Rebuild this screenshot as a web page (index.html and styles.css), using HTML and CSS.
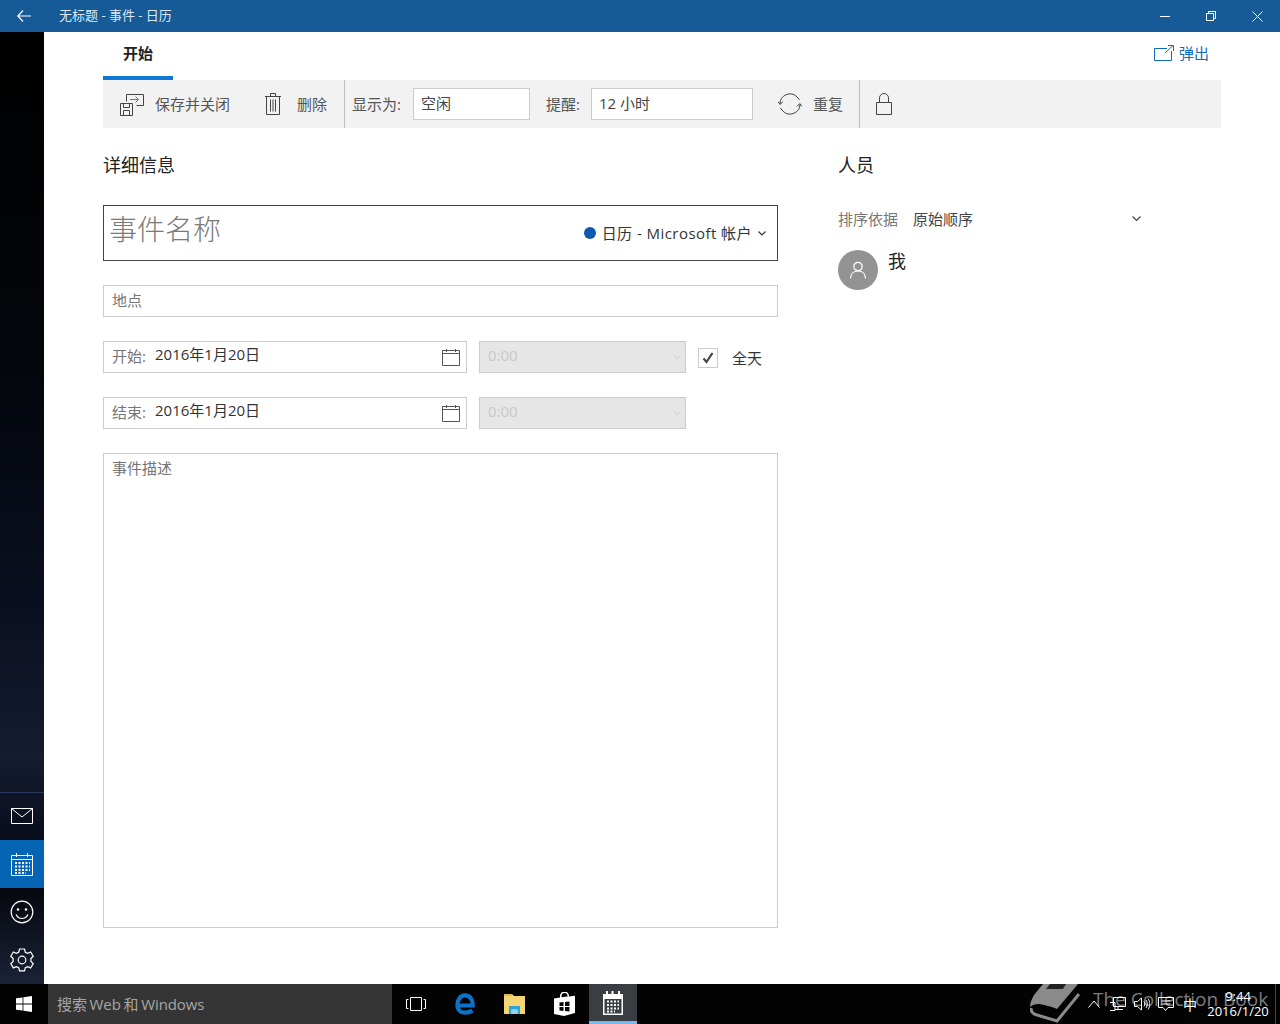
FILE: index.html
```html
<!DOCTYPE html>
<html lang="zh-CN">
<head>
  <meta charset="UTF-8">
  <title>无标题 - 事件 - 日历</title>
  <link rel="stylesheet" href="styles.css">
</head>
<body>
  <div class="titleBar">
    <svg class="backIcon" width="14" height="12" viewBox="0 0 14 12"><path d="M6 .5 .8 6 6 11.500M1 6h13" fill="none" stroke="#fff" stroke-width="1.200"/></svg>
    <span class="titleText">无标题 - 事件 - 日历</span>
    <div class="winButtons">
      <svg width="10" height="10" viewBox="0 0 10 10"><path d="M0 5.500h10" stroke="#fff"/></svg>
      <svg width="10" height="10" viewBox="0 0 10 10"><path d="M.5 2.500h7v7h-7zM2.500 2.500v-2h7v7h-2" fill="none" stroke="#fff"/></svg>
      <svg width="11" height="11" viewBox="0 0 11 11"><path d="M.5.500l10 10M10.500.500l-10 10" stroke="#fff"/></svg>
    </div>
  </div>

  <div class="appBody">
    <div class="rail">
      <div class="railItem">
        <svg width="22" height="16" viewBox="0 0 22 16"><path d="M.5.500h21v15H.500zM.5.500 11 9 21.500.500" fill="none" stroke="#fff"/></svg>
      </div>
      <div class="railItem railActive">
        <svg width="22" height="24" viewBox="0 0 22 24" fill="none" stroke="#fff"><path d="M.5 3.500h21v20H.500zM.5 7.500h21M5.500 1v4M16.500 1v4"/><path stroke-dasharray="2 1.500" stroke-width="2" d="M4 11h15M4 14.500h15M4 18h15M4 21h11"/></svg>
      </div>
      <div class="railItem">
        <svg width="24" height="24" viewBox="0 0 24 24" fill="none" stroke="#fff" stroke-width="1.200"><circle cx="12" cy="12" r="10.800"/><circle cx="8" cy="9.500" r="1.300" fill="#fff" stroke="none"/><circle cx="16" cy="9.500" r="1.300" fill="#fff" stroke="none"/><path d="M6 14.500c1.500 2.800 3.500 4 6 4s4.500-1.200 6-4"/></svg>
      </div>
      <div class="railItem">
        <svg width="24" height="24" viewBox="0 0 24 24" fill="none" stroke="#fff" stroke-width="1.200"><path d="M9.500 1h5l.8 3.200 2.400 1.100 3-1.300 2.500 4.300-2.300 2.200v2.900l2.300 2.200-2.500 4.300-3-1.300-2.400 1.100-.8 3.200h-5l-.8-3.200-2.400-1.100-3 1.300L.8 15.600 3.100 13.400v-2.900L.8 8.300 3.300 4l3 1.300 2.400-1.100z"/><circle cx="12" cy="12" r="3.800"/></svg>
      </div>
    </div>

    <div class="content">
      <div class="tabRow">
        <div class="tab">开始</div>
        <div class="popOut">
          <svg width="20" height="16" viewBox="0 0 20 16" fill="none" stroke="#0f6cbd"><path d="M13 3.500H.5v12h17V6M11 8l8-7.500M14 .5h5.500V6"/></svg>
          <span>弹出</span>
        </div>
      </div>

      <div class="toolbar">
        <div class="toolBtn saveBtn">
          <svg width="24" height="24" viewBox="0 0 24 24" fill="none" stroke="#444"><path d="M6.500 9.500v-7h17v11h-7"/><path d="M10 7.500h8M15.500 4.500l3 3-3 3" stroke="#1e9e8f"/><path d="M.5 11.500h12v12H.500zM3.500 11.500v4h6v-4M3.500 23.500v-5h6v5"/></svg>
          <span>保存并关闭</span>
        </div>
        <div class="toolBtn deleteBtn">
          <svg width="18" height="22" viewBox="0 0 18 22" fill="none" stroke="#444"><path d="M1 3.500h16M6.500 3.500v-3h5v3M2.500 3.500v18h13v-18M6.500 6.500v12M9 6.500v12M11.500 6.500v12"/></svg>
          <span>删除</span>
        </div>
        <div class="toolSep"></div>
        <span class="toolLabel showAs">显示为:</span>
        <div class="toolField showField">空闲</div>
        <span class="toolLabel remind">提醒:</span>
        <div class="toolField remindField">12 小时</div>
        <div class="toolBtn repeatBtn">
          <svg width="24" height="24" viewBox="0 0 24 24" fill="none" stroke="#444"><path d="M2 12a10 10 0 0 1 17-7.200L21.500 8M22 12a10 10 0 0 1-17 7.200L2.500 16"/><path d="M0 9.500l2.200 3 2.600-3M19 14.500l2.800-3 2.200 3"/></svg>
          <span>重复</span>
        </div>
        <div class="toolSep"></div>
        <svg class="lockIcon" width="16" height="22" viewBox="0 0 16 22" fill="none" stroke="#444"><path d="M.5 9.500h15v12H.500zM3.500 9.500V5a4.500 4.500 0 0 1 9 0v4.500"/></svg>
      </div>

      <div class="columns">
        <div class="details">
          <h2 class="sectionTitle">详细信息</h2>
          <div class="nameBox">
            <span class="namePlaceholder">事件名称</span>
            <div class="calendarPick">
              <span class="calDot"></span>
              <span class="calName">日历 - Microsoft 帐户</span>
              <svg width="8" height="5" viewBox="0 0 8 5"><path d="M.5.500 4 4 7.500.500" fill="none" stroke="#333" stroke-width="1.200"/></svg>
            </div>
          </div>
          <div class="field locationField">地点</div>

          <div class="dateRow">
            <div class="field dateField">
              <span class="dateLabel">开始:</span>
              <span class="dateValue">2016年1月20日</span>
              <svg class="calIcon" width="18" height="18" viewBox="0 0 18 18" fill="none" stroke="#555"><path d="M.5 2.500h17v15H.500zM.5 5.500h17M4.500 1v3M13.500 1v3"/></svg>
            </div>
            <div class="timeField">
              <span class="timeText">0:00</span>
              <svg width="8" height="5" viewBox="0 0 8 5"><path d="M.5.500 4 4 7.500.500" fill="none" stroke="#ccc"/></svg>
            </div>
            <div class="checkBox">
              <svg width="12" height="12" viewBox="0 0 12 12"><path d="M1.500 6.500 4.500 10 10.500 1" fill="none" stroke="#444" stroke-width="2.200"/></svg>
            </div>
            <span class="allDay">全天</span>
          </div>

          <div class="dateRow">
            <div class="field dateField">
              <span class="dateLabel">结束:</span>
              <span class="dateValue">2016年1月20日</span>
              <svg class="calIcon" width="18" height="18" viewBox="0 0 18 18" fill="none" stroke="#555"><path d="M.5 2.500h17v15H.500zM.5 5.500h17M4.500 1v3M13.500 1v3"/></svg>
            </div>
            <div class="timeField">
              <span class="timeText">0:00</span>
              <svg width="8" height="5" viewBox="0 0 8 5"><path d="M.5.500 4 4 7.500.500" fill="none" stroke="#ccc"/></svg>
            </div>
          </div>

          <div class="field descField">事件描述</div>
        </div>

        <div class="people">
          <h2 class="sectionTitle">人员</h2>
          <div class="sortRow">
            <span class="sortLabel">排序依据</span>
            <span class="sortValue">原始顺序</span>
            <svg width="9" height="6" viewBox="0 0 9 6"><path d="M.5.500 4.500 4.500 8.500.500" fill="none" stroke="#444" stroke-width="1.200"/></svg>
          </div>
          <div class="person">
            <div class="avatar">
              <svg width="18" height="18" viewBox="0 0 18 18" fill="none" stroke="#fff" stroke-width="1.200"><circle cx="9" cy="5.500" r="4.200"/><path d="M1.500 17.500c0-4.500 3-7.500 7.500-7.500s7.500 3 7.500 7.500"/></svg>
            </div>
            <span class="personName">我</span>
          </div>
        </div>
      </div>
    </div>
  </div>

  <div class="taskBar">
    <div class="startBtn">
      <svg width="16" height="16" viewBox="0 0 16 16" fill="#fff"><path d="M0 2.300 6.600 1.400v6.200H0zM7.400 1.300 16 0v7.600H7.400zM0 8.400h6.600v6.200L0 13.700zM7.400 8.400H16V16l-8.600-1.300z"/></svg>
    </div>
    <div class="searchBox">搜索 Web 和 Windows</div>
    <div class="taskIcon viewIcon">
      <svg width="20" height="14" viewBox="0 0 20 14" fill="none" stroke="#fff"><path d="M4.500.500h11v13h-11zM2.500 2.500H.5v9h2M17.500 2.500h2v9h-2"/></svg>
    </div>
    <div class="taskIcon edgeIcon">
      <svg width="20" height="22" viewBox="0 0 20 22"><path d="M3.500 12.500H17.700C18 6.500 15 2.400 10 2.400 5.500 2.400 2.400 6.500 2.400 12c0 5 3.300 7.700 7.800 7.700 3 0 5.300-.8 7.300-2.200" fill="none" stroke="#0c71c9" stroke-width="4.200"/></svg>
    </div>
    <div class="taskIcon folderIcon">
      <svg width="21" height="20" viewBox="0 0 21 20"><path d="M0 0h8l2 2h11v18H0z" fill="#f4d675"/><path d="M0 0h8v2H0z" fill="#e2b94e"/><path d="M5 12h11v8h-2.500v-4.500h-6V20H5z" fill="#2aa6d6"/><path d="M7.500 15.500h6V20h-6z" fill="#8fd3ee"/></svg>
    </div>
    <div class="taskIcon storeIcon">
      <svg width="21" height="24" viewBox="0 0 21 24"><path fill-rule="evenodd" d="M0 6.500 6 5.600V4a4.500 4.500 0 0 1 9 0v.6l6-.9V21L10 24 0 22zM7.500 5.300 13.500 4.500V4a3 3 0 0 0-6 0zM5.500 10.500v3.500h4v-4zM11 10v4h4.500v-4.500zM5.500 15v3.500l4 .5V15zM11 15v4l4.500.5V15z" fill="#fff"/></svg>
    </div>
    <div class="taskIcon taskActive">
      <svg width="20" height="24" viewBox="0 0 20 24"><path fill-rule="evenodd" d="M0 3h3V0h2v3h3.500V0h2v3H15V0h2v3h3v21H0zM1.500 8v14.500h17V8z" fill="#fff"/><path d="M4 10.500h12M4 14h12M4 17.500h12M4 20.500h8" stroke="#fff" stroke-width="2" stroke-dasharray="2 1.500"/></svg>
    </div>

    <div class="watermark">
      <svg width="52" height="40" viewBox="0 0 52 40"><path d="M13 0H48L27 25Q20 22 9 20 3 20 0 23 0 18 4 11z" fill="#8a8a8a"/><path d="M20 0h16l-3 5H16z" fill="#222"/><path d="M1 24c0 4 2 6 6 7l20 6L49 10" fill="none" stroke="#8a8a8a" stroke-width="3"/></svg>
      <span>The Collection Book</span>
    </div>

    <div class="tray">
      <svg class="trayUp" width="12" height="8" viewBox="0 0 12 8"><path d="M.5 7.500 6 1l5.500 6.500" fill="none" stroke="#fff"/></svg>
      <svg class="trayNet" width="16" height="14" viewBox="0 0 16 14" fill="none" stroke="#fff"><path d="M3.500.500h12v9h-12zM0 5.500h5v8H0M8 9.500v3M5 12.500h8"/></svg>
      <svg class="trayItem" width="16" height="14" viewBox="0 0 16 14" fill="none" stroke="#fff"><path d="M.5 4.500h3l4-3.500v12l-4-3.500h-3zM10 4.500c1 1.500 1 3.500 0 5M12 3c1.700 2.300 1.700 5.700 0 8M14 1.500c2.400 3.300 2.400 7.700 0 11"/></svg>
      <svg class="trayItem" width="16" height="15" viewBox="0 0 16 15" fill="none" stroke="#fff"><path d="M.5.500h15v10H10l-2.500 3-2.500-3H.500zM3.500 4h9M3.500 7h9"/></svg>
      <span class="imeText">中</span>
      <div class="clock">
        <span>9:44</span>
        <span>2016/1/20</span>
      </div>
    </div>
    <div class="showDesktop"></div>
  </div>
</body>
</html>
```

FILE: styles.css
```css
* {
  box-sizing: border-box;
}
html, body {
  margin: 0;
  height: 100%;
}
body {
  display: flex;
  flex-direction: column;
  height: 1024px;
  overflow: hidden;
  background: #fff;
  color: #333;
  font-family: "Open Sans", "Noto Sans CJK SC", sans-serif;
  font-size: 15px;
}
svg {
  display: block;
  flex: none;
}

/* title bar */
.titleBar {
  display: flex;
  align-items: center;
  height: 32px;
  flex: none;
  background: #165a98;
  color: #fff;
}
.backIcon {
  margin-left: 17px;
}
.titleText {
  margin-left: 28px;
  margin-top: -4px;
  font-size: 13px;
  color: #dce8f3;
}
.winButtons {
  display: flex;
  align-items: center;
  gap: 36px;
  margin-left: auto;
  margin-right: 17px;
}

/* left rail */
.appBody {
  display: flex;
  flex: 1;
  min-height: 0;
}
.rail {
  display: flex;
  flex-direction: column;
  justify-content: flex-end;
  width: 44px;
  flex: none;
  background: linear-gradient(#000 0%, #03060b 35%, #0a0f20 60%, #151c30 76%, #0a1020 83%, #06080e 90%, #1a2236 100%);
}
.railItem {
  display: flex;
  align-items: center;
  justify-content: center;
  height: 48px;
}
.railItem:first-child {
  border-top: 1px solid #2a3c5c;
  padding-bottom: 1px;
}
.railActive {
  background: #0565b4;
}

/* main content */
.content {
  flex: 1;
  padding-left: 59px;
  padding-right: 59px;
  background: #fff;
}
.tabRow {
  display: flex;
  justify-content: space-between;
  height: 48px;
}
.tab {
  width: 70px;
  height: 48px;
  padding-top: 10px;
  border-bottom: 4px solid #0f78d4;
  text-align: center;
  font-weight: 700;
  color: #222;
}
.popOut {
  display: flex;
  gap: 5px;
  align-items: center;
  margin-right: 12px;
  height: 42px;
  color: #0f6cbd;
}
.popOut span {
  margin-top: -2px;
}

/* toolbar */
.toolbar {
  display: flex;
  align-items: center;
  height: 48px;
  background: #f2f2f2;
  color: #555;
}
.toolBtn {
  display: flex;
  align-items: center;
}
.toolBtn span, .toolLabel {
  margin-top: -2px;
}
.saveBtn {
  gap: 11px;
  margin-left: 17px;
}
.deleteBtn {
  gap: 15px;
  margin-left: 34px;
}
.toolSep {
  width: 1px;
  height: 48px;
  background: #bdbdbd;
}
.deleteBtn + .toolSep {
  margin-left: 17px;
}
.showAs {
  margin-left: 7px;
}
.toolField {
  height: 32px;
  padding: 3px 7px;
  border: 1px solid #ccc;
  background: #fff;
  color: #444;
}
.showField {
  width: 117px;
  margin-left: 12px;
}
.remind {
  margin-left: 16px;
}
.remindField {
  width: 162px;
  margin-left: 11px;
}
.repeatBtn {
  gap: 11px;
  margin-left: 25px;
}
.repeatBtn + .toolSep {
  margin-left: 16px;
}
.lockIcon {
  margin-left: 16px;
}

/* two columns */
.columns {
  display: flex;
  gap: 60px;
}
.details {
  width: 675px;
  flex: none;
}
.people {
  flex: 1;
}
.sectionTitle {
  margin: 24px 0 0;
  height: 53px;
  font-size: 18px;
  line-height: 27px;
  font-weight: 400;
  color: #222;
}
.nameBox {
  display: flex;
  justify-content: space-between;
  height: 56px;
  padding: 0 11px 0 5px;
  border: 1px solid #444;
}
.namePlaceholder {
  font-size: 28px;
  line-height: 46px;
  font-weight: 300;
  color: #7a7a7a;
}
.calendarPick {
  display: flex;
  align-items: center;
  gap: 6px;
  height: 54px;
}
.calName {
  margin-top: -2px;
  letter-spacing: 0.45px;
}
.calDot {
  width: 12px;
  height: 12px;
  border-radius: 50%;
  background: #0f58b0;
}
.field {
  border: 1px solid #ccc;
  color: #767676;
}
.locationField {
  height: 32px;
  margin-top: 24px;
  padding: 3px 8px;
}
.dateRow {
  display: flex;
  align-items: center;
  height: 32px;
  margin-top: 24px;
}
.dateField {
  display: flex;
  align-items: center;
  width: 364px;
  height: 32px;
  padding: 0 6px 0 8px;
}
.dateLabel {
  width: 43px;
  flex: none;
  margin-top: -4px;
}
.dateValue {
  color: #333;
  margin-top: -7px;
}
.calIcon {
  margin-left: auto;
}
.timeField {
  display: flex;
  align-items: center;
  justify-content: space-between;
  width: 207px;
  height: 32px;
  margin-left: 12px;
  padding: 0 4px 0 8px;
  background: #e6e6e6;
  border: 1px solid #ccc;
  color: #c8c8c8;
}
.timeText {
  margin-top: -5px;
}
.checkBox {
  display: flex;
  align-items: center;
  justify-content: center;
  width: 20px;
  height: 20px;
  margin-left: 12px;
  margin-top: 2px;
  border: 1px solid #ccc;
}
.allDay {
  margin-left: 14px;
  margin-top: 1px;
  color: #333;
}
.descField {
  height: 475px;
  margin-top: 24px;
  padding: 3px 8px;
}

/* people column */
.sortRow {
  display: flex;
  align-items: center;
  height: 22px;
  margin-top: 3px;
  width: 303px;
}
.sortLabel {
  color: #767676;
  margin-top: -2px;
}
.sortValue {
  margin-left: 15px;
  margin-top: -2px;
  color: #444;
}
.sortRow svg {
  margin-left: auto;
}
.person {
  display: flex;
  gap: 10px;
  margin-top: 20px;
}
.avatar {
  display: flex;
  align-items: center;
  justify-content: center;
  width: 40px;
  height: 40px;
  border-radius: 50%;
  background: #939393;
}
.personName {
  font-size: 18px;
  line-height: 22px;
  color: #222;
}

/* task bar */
.taskBar {
  position: relative;
  display: flex;
  align-items: center;
  height: 40px;
  flex: none;
  overflow: hidden;
  background: #030304;
}
.startBtn {
  display: flex;
  align-items: center;
  justify-content: center;
  width: 48px;
  height: 40px;
}
.searchBox {
  width: 344px;
  height: 40px;
  padding-left: 9px;
  background: #353535;
  color: #a6a6a6;
  font-size: 15px;
  line-height: 40px;
  word-spacing: -1px;
  letter-spacing: -0.1px;
}
.taskIcon {
  display: flex;
  align-items: center;
  justify-content: center;
  height: 40px;
}
.viewIcon {
  width: 48px;
}
.edgeIcon {
  width: 50px;
}
.folderIcon {
  width: 49px;
}
.storeIcon {
  width: 50px;
}
.taskActive {
  width: 48px;
  background: #3a3e43;
  border-bottom: 3px solid #76b9ed;
}
.tray {
  position: relative;
  display: flex;
  align-items: center;
  margin-left: auto;
  color: #fff;
}
.trayNet {
  margin-left: 10px;
}
.trayItem {
  margin-left: 8px;
}
.imeText {
  margin-left: 9px;
  font-size: 14px;
}
.clock {
  display: flex;
  flex-direction: column;
  align-items: center;
  width: 60px;
  margin-left: 11px;
  font-size: 13px;
  line-height: 15px;
}
.showDesktop {
  width: 5px;
  height: 40px;
  margin-left: 7px;
  border-left: 1px solid #444;
}
.watermark {
  position: absolute;
  left: 1030px;
  top: 0;
  display: flex;
  gap: 11px;
  color: #7c7c7c;
  font-size: 19px;
  line-height: 30px;
  white-space: nowrap;
}
```
